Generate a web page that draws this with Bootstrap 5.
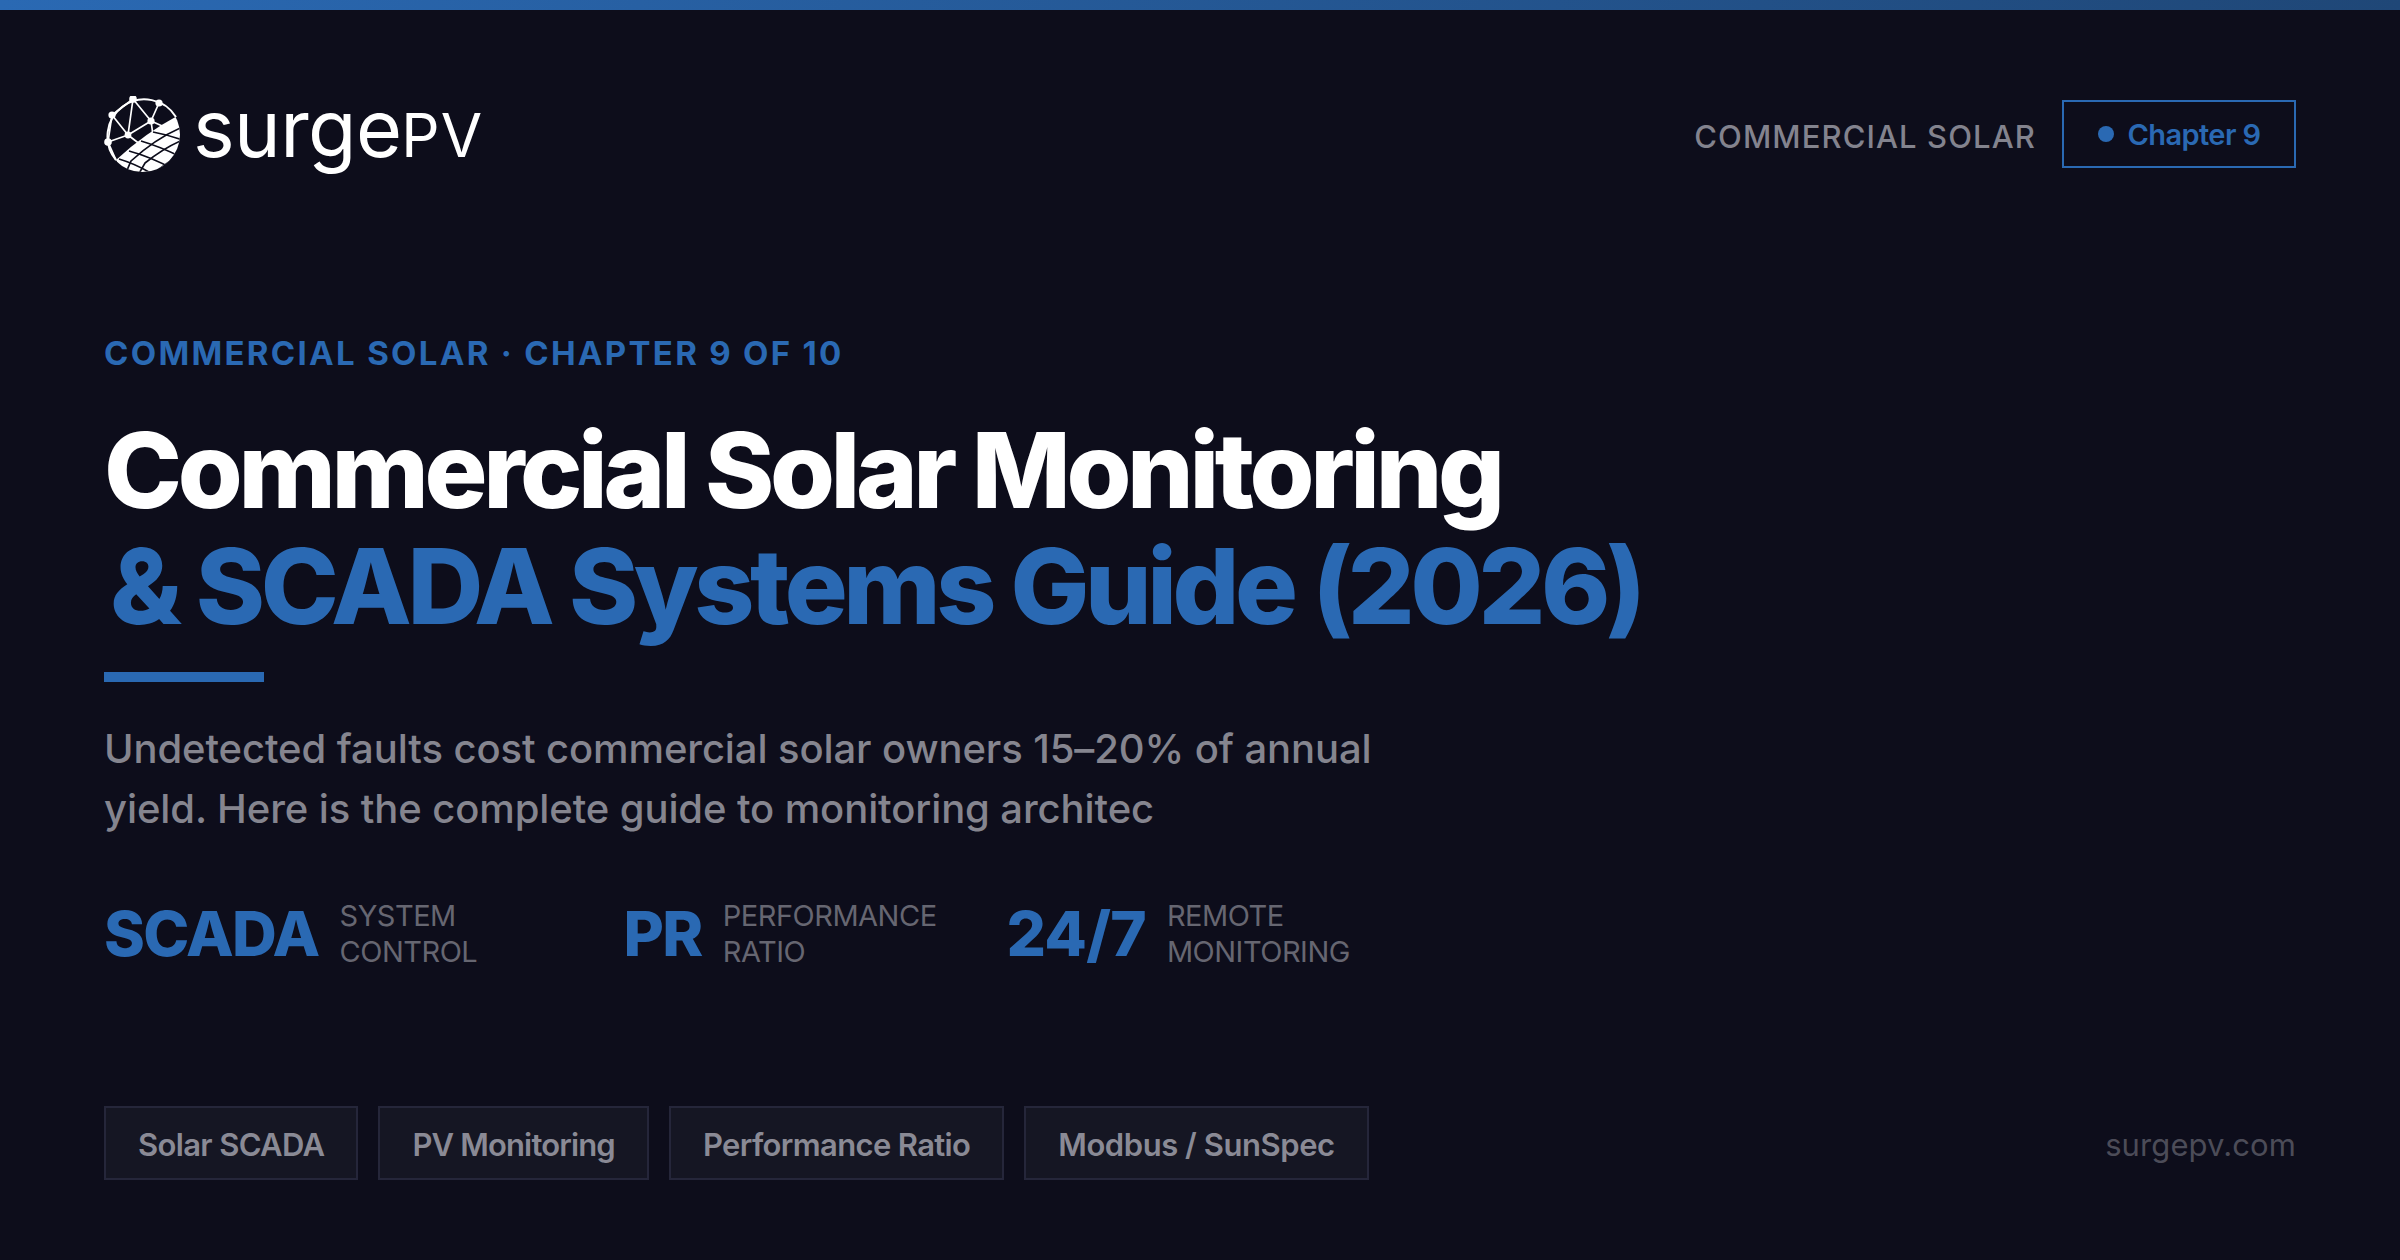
<!DOCTYPE html>
<html lang="en">
<head>
    <meta charset="UTF-8">
    <meta name="viewport" content="width=device-width, initial-scale=1.0">
    <title>Commercial Solar Monitoring &amp; SCADA Systems Guide (2026)</title>
    <link href="https://cdn.jsdelivr.net/npm/bootstrap@5.3.0/dist/css/bootstrap.min.css" rel="stylesheet">
    <style>
        html, body { height: 100%; }
        body { background: #0d0d1b; font-family: "Inter", "Liberation Sans", sans-serif; overflow: hidden; }
        .top-strip { height: 10px; background: linear-gradient(90deg, #2a69b3 0%, #1f4777 100%); }
        .sheet { height: 1250px; padding: 87px 104px 80px; }

        .brand { height: 76px; gap: 11px; }
        .brand-mark { width: 78px; height: 78px; flex: none; }
        .brand-name { color: #fff; font-size: 79px; font-weight: 400; line-height: 1; letter-spacing: -.6px; padding-bottom: 14px; }
        .brand-name span { font-size: 60px; letter-spacing: 1px; }
        .head-group { margin-bottom: 3px; }
        .head-label { color: #83838e; font-size: 31px; font-weight: 500; letter-spacing: 1.1px; margin-right: 26px; padding-top: 7px; }
        .chapter-tag { width: 234px; height: 68px; border: 2px solid #2a69b3; color: #2a69b3; font-size: 29px; font-weight: 600; letter-spacing: -.6px; gap: 14px; padding-top: 3px; }
        .chapter-dot { width: 16px; height: 16px; border-radius: 50%; background: #2a69b3; margin-bottom: 3px; }

        .eyebrow { color: #2a69b3; font-size: 33px; font-weight: 700; letter-spacing: 2.3px; line-height: 40px; margin-top: 160px; }
        .headline { font-size: 105px; font-weight: 800; letter-spacing: -4.35px; line-height: 116px; color: #fff; margin: 39px 0 0; }
        .headline em { font-style: normal; color: #2a69b3; display: block; padding-left: 6px; letter-spacing: -4.45px; }
        .rule-bar { width: 160px; height: 10px; background: #2a69b3; margin-top: 28px; }
        .intro { color: #85858f; font-size: 40px; font-weight: 500; line-height: 60px; letter-spacing: -.1px; width: 1300px; margin: 37px 0 0; }

        .stats { gap: 70px; margin-top: 59px; }
        .stat { gap: 21px; }
        .stat-value { color: #2a69b3; font-size: 62px; font-weight: 800; letter-spacing: -1.6px; line-height: 1; }
        .stat-value-open { letter-spacing: -.8px; }
        .stat-label { color: #666671; font-size: 29px; line-height: 36px; letter-spacing: -.5px; }
        .stat-label-wide { width: 214px; }

        .chips { gap: 20px; }
        .chip { height: 74px; padding: 5px 32px 0; background: #151623; border: 2px solid #25263a; color: #8a8a95; font-size: 31px; font-weight: 600; letter-spacing: -.65px; }
        .chip-tight { letter-spacing: -.85px; }
        .chip-open { letter-spacing: -.45px; }
        .site-link { color: #4c4c58; font-size: 31px; letter-spacing: .1px; padding-top: 5px; }
    </style>
</head>
<body>
    <div class="top-strip"></div>
    <div class="sheet d-flex flex-column">
        <!-- Header -->
        <header class="d-flex justify-content-between align-items-center">
            <div class="brand d-flex align-items-center">
                <svg class="brand-mark" viewBox="9 11 78 78" aria-hidden="true">
                    <defs><clipPath id="disc"><circle cx="47.5" cy="49.5" r="37.5"/></clipPath></defs>
                    <g fill="none" stroke="#fff" stroke-width="1.7">
                        <path stroke-width="2" d="M21 75A37 37 0 1 1 81 32"/>
                        <path d="M38 14L17 30M38 14L33 50M38 14L56 36M64 18L56 36M17 30L33 50M13 57L33 50M13 57L17 30M33 50L56 36M56 36L74 44M33 50L46 60M56 36L58 50M13 57L21 75"/>
                    </g>
                    <g fill="#fff">
                        <circle cx="38" cy="14" r="3.8"/><circle cx="64" cy="18" r="3.6"/><circle cx="17" cy="30" r="3.6"/>
                        <circle cx="56" cy="36" r="3.6"/><circle cx="33" cy="50" r="3.4"/><circle cx="13" cy="57" r="3.8"/>
                    </g>
                    <g clip-path="url(#disc)">
                        <path fill="#fff" d="M84 30Q50 48 21 75L30 92H90V30Z"/>
                        <g fill="none" stroke="#0d0d1b" stroke-width="1.7">
                            <path d="M90 41Q62 52 36 76L30 90"/>
                            <path d="M90 54Q70 62 50 78L42 92"/>
                            <path d="M90 68Q76 74 62 86L56 92"/>
                            <path d="M58 47Q74 50 90 56"/>
                            <path d="M46 56Q66 62 86 72"/>
                            <path d="M34 66Q56 72 78 84"/>
                            <path d="M24 74Q44 80 62 92"/>
                        </g>
                    </g>
                </svg>
                <div class="brand-name">surge<span>PV</span></div>
            </div>
            <div class="head-group d-flex align-items-center">
                <span class="head-label">COMMERCIAL SOLAR</span>
                <span class="chapter-tag d-flex align-items-center justify-content-center"><i class="chapter-dot"></i>Chapter 9</span>
            </div>
        </header>

        <!-- Main copy -->
        <div class="eyebrow">COMMERCIAL SOLAR · CHAPTER 9 OF 10</div>
        <h1 class="headline">Commercial Solar Monitoring <em>&amp; SCADA Systems Guide (2026)</em></h1>
        <div class="rule-bar"></div>
        <p class="intro">Undetected faults cost commercial solar owners 15–20% of annual yield. Here is the complete guide to monitoring architec</p>

        <!-- Stats -->
        <div class="stats d-flex align-items-center">
            <div class="stat d-flex align-items-center">
                <div class="stat-value">SCADA</div>
                <div class="stat-label stat-label-wide">SYSTEM<br>CONTROL</div>
            </div>
            <div class="stat d-flex align-items-center">
                <div class="stat-value">PR</div>
                <div class="stat-label">PERFORMANCE<br>RATIO</div>
            </div>
            <div class="stat d-flex align-items-center">
                <div class="stat-value stat-value-open">24/7</div>
                <div class="stat-label">REMOTE<br>MONITORING</div>
            </div>
        </div>

        <!-- Footer -->
        <footer class="d-flex justify-content-between align-items-center mt-auto">
            <div class="chips d-flex">
                <span class="chip d-flex align-items-center">Solar SCADA</span>
                <span class="chip chip-tight d-flex align-items-center">PV Monitoring</span>
                <span class="chip d-flex align-items-center">Performance Ratio</span>
                <span class="chip chip-open d-flex align-items-center">Modbus / SunSpec</span>
            </div>
            <span class="site-link">surgepv.com</span>
        </footer>
    </div>
    <script src="https://cdn.jsdelivr.net/npm/bootstrap@5.3.0/dist/js/bootstrap.bundle.min.js"></script>
</body>
</html>
